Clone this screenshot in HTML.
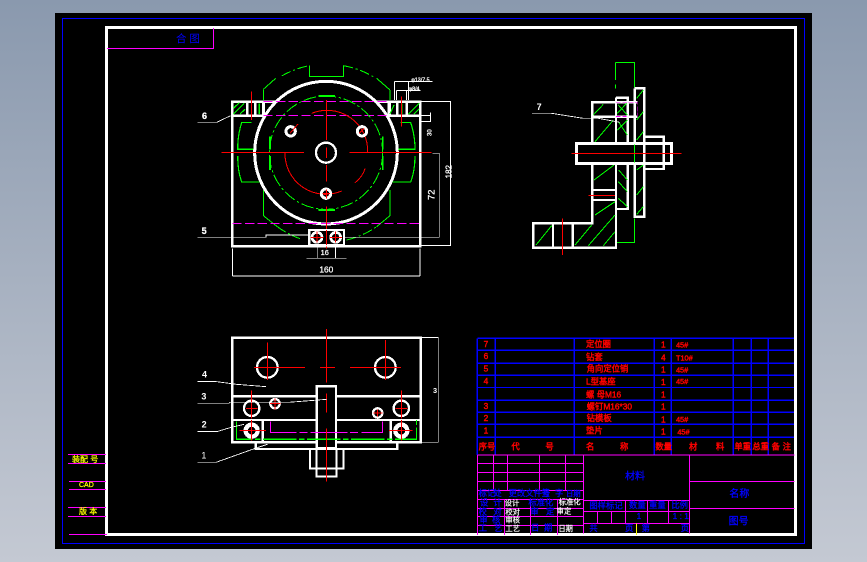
<!DOCTYPE html>
<html><head><meta charset="utf-8"><style>
html,body{margin:0;padding:0;width:867px;height:562px;overflow:hidden;background:linear-gradient(180deg,#8a99ae 0%,#c4c9d3 100%)}
svg{position:absolute;left:0;top:0;shape-rendering:crispEdges}
text{font-family:"Liberation Sans","Noto Sans CJK SC",sans-serif}
</style></head><body>
<svg width="867" height="562" viewBox="0 0 867 562" fill="none">
<rect x="55" y="13" width="757" height="536" fill="#000"/>
<rect x="62" y="18" width="743" height="1" fill="#0000ff"/>
<rect x="62" y="543" width="743" height="1" fill="#0000ff"/>
<rect x="62" y="18" width="1" height="526" fill="#0000ff"/>
<rect x="804" y="18" width="1" height="526" fill="#0000ff"/>
<rect x="106.5" y="27.5" width="689" height="507" stroke="#fff" stroke-width="3"/>
<path d="M107 48.500H213.500V28" stroke="#ff00ff"/>
<text x="176" y="42" font-size="10.500" fill="#0000ff">合 图</text>
<g stroke="#ff00ff" stroke-width="1"><path d="M68 454.500H106M68 463.500H106M69 481.500H106M69 489.500H106M68 507.500H106M68 516.500H106M69 534.500H107"/></g>
<g font-size="8" fill="#ffff00" stroke="#ffff00" stroke-width=".25"><text x="72" y="462">装配 号</text><text x="79" y="487" font-size="7">CAD</text><text x="79" y="514">版 本</text></g>

<!-- top view -->
<g transform="translate(190 50) scale(.33333)">
<rect x="127" y="155" width="564" height="434" stroke="#fff" stroke-width="8"/>
<rect x="127" y="155" width="95" height="42" stroke="#fff" stroke-width="7"/>
<rect x="596" y="155" width="95" height="42" stroke="#fff" stroke-width="7"/>
<path d="M172 155V197M196 155V197M220 155V197M600 155V197M622 155V197M650 155V197" stroke="#fff" stroke-width="7"/>
<path d="M130 192L162 160M130 175L148 158M150 192L165 178M208 160L208 192M655 192L688 160M672 192L688 176M600 192L612 165M636 192V160" stroke="#00ff00" stroke-width="3.500"/>
<path d="M220 118L257 85M220 118V150M600 120L560 85M600 120V150M358 47V80H460V47M220 420V497L262 530M600 420V497L560 530" stroke="#00ff00" stroke-width="3"/>
<path d="M275 78A262 262 0 0 1 358 47M460 47A262 262 0 0 1 556 84M262 530A262 262 0 0 0 330 566M470 570A262 262 0 0 0 560 530" stroke="#00ff00" stroke-width="3" stroke-dasharray="30 8 6 8"/>
<path d="M185 218H155Q143 255 143 298H238M143 318Q143 362 155 396H215M632 218H662Q675 255 675 298H578M675 318Q675 362 662 396H605" stroke="#00ff00" stroke-width="3.500"/>
<circle cx="408" cy="308" r="214" fill="#000" stroke="#fff" stroke-width="9"/>
<path d="M220 155H600M220 196H600M127 520H690" stroke="#ff00ff" stroke-width="3" stroke-dasharray="28 10"/>
<circle cx="408" cy="308" r="170" stroke="#00ff00" stroke-width="3" stroke-dasharray="38 8 7 8"/>
<path d="M385 138H435M385 480H435M240 260V298M578 260V298M240 318V360M578 318V360" stroke="#00ff00" stroke-width="5"/>
<path d="M365 190A122 122 0 0 1 533 308M285 308A122 122 0 0 0 455 423M495 398Q518 380 525 356" stroke="#ff0000" stroke-width="3"/>
<circle cx="408" cy="308" r="30" stroke="#fff" stroke-width="7"/>
<circle cx="302" cy="244" r="14" stroke="#fff" stroke-width="9"/>
<circle cx="516" cy="244" r="14" stroke="#fff" stroke-width="9"/>
<circle cx="408" cy="431" r="14" stroke="#fff" stroke-width="9"/>
<path d="M95 307H342M478 307H725M409 150V270M409 292V324M409 345V395M409 418V445M409 470V595M184 125V210M634 140V230M300 250L324 222M508 250L522 235M398 431H420" stroke="#ff0000" stroke-width="3"/>
<rect x="358" y="540" width="104" height="46" fill="#000" stroke="#fff" stroke-width="7"/>
<circle cx="381" cy="562" r="15" stroke="#fff" stroke-width="8"/><circle cx="437" cy="562" r="15" stroke="#fff" stroke-width="8"/>
<path d="M362 562H400M420 562H456M381 545V578M437 545V578M409 540V585" stroke="#ff0000" stroke-width="3"/>
<g stroke="#fff" stroke-width="2.500">
<path d="M22 217H80L122 197M22 562H228V555H355M465 562H748V310H728M695 155H782V587H695M695 197H722M695 215H722V188M614 95V150M656 95V150M614 95H728M620 122V150M650 122V150M620 122H692"/>
<path d="M382 590V625M437 590V625M350 625H470M128 595V678M690 595V678M128 678H690"/>
</g>
<g fill="#fff" font-size="27" stroke="#fff" stroke-width=".8">
<text x="36" y="207" font-weight="bold">6</text><text x="35" y="552" font-weight="bold">5</text>
<text x="392" y="615" font-size="22">16</text><text x="388" y="667" font-size="25">160</text>
<text transform="translate(734 450) rotate(-90)" font-size="28">72</text>
<text transform="translate(785 385) rotate(-90)" font-size="24">182</text>
<text transform="translate(724 258) rotate(-90)" font-size="18">30</text>
<text x="664" y="94" font-size="16">φ13/7.5</text><text x="656" y="122" font-size="16">φ8/4</text>
</g>
</g>

<!-- side view -->
<g transform="translate(520 55) scale(.33333)">
<path d="M287 22H343V97M287 22V75M287 88V100M343 490V562H290" stroke="#00ff00" stroke-width="3"/>
<path d="M217 265V142H288M217 325V505H40V578H288V440M288 128H323V265M288 128V265M288 325V462H323V325M344 100H373V265M344 100V265M344 325V485H373V325M288 142H352M288 185H352M217 185H288M217 405H288M217 435H288M99 505V578M158 505V578" stroke="#fff" stroke-width="7"/>
<path d="M220 180L250 148M225 260L280 195M292 175L320 145M292 225L322 195M350 130L370 105M350 195L370 170M350 255L370 230M222 375L282 330M295 380L322 410M295 430L322 455M296 345L322 375M350 345L370 330M350 420L370 395M350 478L370 455M48 570L95 512M165 570L215 510M205 572L285 480M250 572L285 530M225 480L285 440M295 150L322 180M295 200L322 240" stroke="#00ff00" stroke-width="3"/>
<path d="M288 142H352V185M352 155V185M288 185H320" stroke="#ff00ff" stroke-width="2.500" stroke-dasharray="14 5"/>
<rect x="170" y="265" width="285" height="60" fill="#000" stroke="#fff" stroke-width="9"/>
<path d="M373 245H431V342H373M373 268V322M431 265V322" stroke="#fff" stroke-width="7" />
<path d="M343 268V322" stroke="#00ff00" stroke-width="3"/>
<path d="M155 295H485M205 421H285M127 490V600" stroke="#ff0000" stroke-width="3"/>
<path d="M36 175H95L190 190H235L300 202" stroke="#fff" stroke-width="2.500"/>
<text x="50" y="165" font-size="27" font-weight="bold" fill="#fff">7</text>
</g>

<!-- front view -->
<g transform="translate(190 325) scale(.33333)">
<rect x="127" y="38" width="565" height="314" stroke="#fff" stroke-width="8"/>
<path d="M127 214H378M440 214H692M127 285H378M440 285H692M218 285V352M602 285V352M197 352V372H622V352" stroke="#fff" stroke-width="7"/>
<path d="M360 372V430H460V372M380 430V454H440V430M380 372V430M440 372V430" stroke="#fff" stroke-width="6"/>
<rect x="380" y="184" width="58" height="186" fill="#000" stroke="#fff" stroke-width="7"/>
<path d="M140 290V343H680V285" stroke="#00ff00" stroke-width="3.500" stroke-dasharray="100 8 16 8"/>
<path d="M382 343H438" stroke="#00ff00" stroke-width="4"/>
<path d="M242 290V322H578V290" stroke="#ff00ff" stroke-width="3" stroke-dasharray="110 8 24 10"/>
<circle cx="232" cy="127" r="31" stroke="#fff" stroke-width="7"/><circle cx="586" cy="127" r="31" stroke="#fff" stroke-width="7"/>
<circle cx="185" cy="250" r="23" stroke="#fff" stroke-width="7"/><circle cx="634" cy="250" r="23" stroke="#fff" stroke-width="7"/>
<circle cx="255" cy="236" r="14" stroke="#fff" stroke-width="7"/><circle cx="563" cy="264" r="14" stroke="#fff" stroke-width="7"/>
<circle cx="185" cy="317" r="18" stroke="#fff" stroke-width="13"/><circle cx="634" cy="317" r="18" stroke="#fff" stroke-width="13"/>
<path d="M192 127H345M232 52V165M480 127H633M586 45V165M390 127H435M409 12V172M409 205V262M409 310V470M168 250H203M185 197V280M617 250H652M634 197V280M240 236H272M255 220V254M550 264H577M563 254V275M148 317H228M185 285V347M597 317H668M634 285V347" stroke="#ff0000" stroke-width="3"/>
<g stroke="#fff" stroke-width="2.500"><path d="M22 170H80L140 178L228 185M22 235H117L120 232H295L410 223M22 320H80L120 308L162 298M22 412H78L190 372L232 358M695 38H745V352H695"/></g>
<g fill="#fff" font-size="27" font-weight="bold"><text x="36" y="158">4</text><text x="34" y="224">3</text><text x="35" y="308">2</text><text x="34" y="401" font-weight="normal">1</text><text x="729" y="204" font-size="22">3</text></g>
</g>

<!-- parts table -->
<g transform="translate(470 335) scale(.33333)">
<path d="M22 10H972M22 46H972M22 85H972M22 121H972M22 158H972M22 196H972M22 232H972M22 268H972M22 307H972M22 10V360M76 10V360M313 10V360M553 10V360M604 10V360M790 10V360M844 10V360M895 10V360" stroke="#0000ff" stroke-width="3.500"/>
<g fill="#ff0000" stroke="#ff0000" stroke-width="1.300" font-size="25">
<text x="41" y="36">7</text><text x="41" y="72">6</text><text x="41" y="110">5</text><text x="41" y="147">4</text><text x="41" y="222">3</text><text x="41" y="258">2</text><text x="41" y="296">1</text>
<text x="348" y="36">定位圈</text><text x="348" y="75">钻套</text><text x="350" y="110">角向定位销</text><text x="348" y="148">L型基座</text><text x="348" y="187">螺 母M16</text><text x="350" y="224">螺钉M16*30</text><text x="350" y="258">钻模板</text><text x="348" y="296">垫片</text>
<text x="573" y="38">1</text><text x="573" y="77">4</text><text x="573" y="113">1</text><text x="573" y="150">1</text><text x="573" y="188">1</text><text x="573" y="224">1</text><text x="573" y="262">1</text><text x="573" y="298">1</text>
<text x="618" y="38" font-size="22">45#</text><text x="618" y="77" font-size="22">T10#</text><text x="618" y="112" font-size="22">45#</text><text x="618" y="147" font-size="22">45#</text><text x="618" y="261" font-size="22">45#</text><text x="622" y="298" font-size="22">45#</text>
<text x="26" y="344">序号</text><text x="124" y="344">代</text><text x="226" y="344">号</text><text x="348" y="344">名</text><text x="450" y="344">称</text><text x="556" y="344">数量</text><text x="657" y="344">材</text><text x="738" y="344">料</text><text x="793" y="344">单重</text><text x="847" y="344">总重</text><text x="905" y="344">备</text><text x="938" y="344">注</text>
</g>
</g>

<!-- title block -->
<g transform="translate(470 450) scale(.33333)">
<path d="M22 15H974M22 40H340M22 67H340M22 94H340M22 121H340M22 148H340M22 175H340M22 199H340M22 226H340M22 15V255M70 15V121M112 15V121M208 15V121M286 15V121M103 148V255M181 148V255M262 148V255M340 15V250M658 15V250M340 151H658M340 184H658M340 221H658M382 184V221M424 184V221M466 151V221M532 151V221M595 151V221M658 94H974M658 175H974" stroke="#ff00ff" stroke-width="3"/>
<path d="M499 221V255" stroke="#ffff00" stroke-width="3"/>
<g fill="#0000ff" stroke="#0000ff" stroke-width=".9" font-size="25">
<text x="465" y="88" font-size="30">材料</text><text x="778" y="141" font-size="30">名称</text><text x="776" y="224" font-size="30">图号</text>
<text x="26" y="138">标记</text><text x="70" y="138">处</text><text x="116" y="138">更改文件号</text><text x="215" y="138">签</text><text x="255" y="138">字</text><text x="288" y="138" font-size="22">日期</text>
<text x="30" y="167">设</text><text x="70" y="167">计</text><text x="175" y="167">标准化</text>
<text x="26" y="194">校</text><text x="70" y="194">对</text><text x="181" y="194">审</text><text x="228" y="194">定</text>
<text x="28" y="218">审</text><text x="66" y="218">核</text>
<text x="26" y="243">工</text><text x="72" y="243">艺</text><text x="183" y="241">日</text><text x="222" y="241">期</text>
<text x="358" y="176">图样标记</text><text x="477" y="174">数量</text><text x="537" y="174">重量</text><text x="604" y="174">比例</text>
<text x="500" y="207">1</text><text x="608" y="207">1 : 1</text>
<text x="358" y="243">共</text><text x="465" y="243">页</text><text x="515" y="243">第</text><text x="632" y="243">页</text>
</g>
<g fill="#fff" font-size="22" stroke="#fff" stroke-width=".6">
<text x="104" y="166">设计</text><text x="106" y="193">校对</text><text x="106" y="218">审核</text><text x="106" y="243">工艺</text>
<text x="266" y="163">标准化</text><text x="260" y="190">审定</text><text x="265" y="243">日期</text>
</g>
</g>
</svg>
</body></html>
